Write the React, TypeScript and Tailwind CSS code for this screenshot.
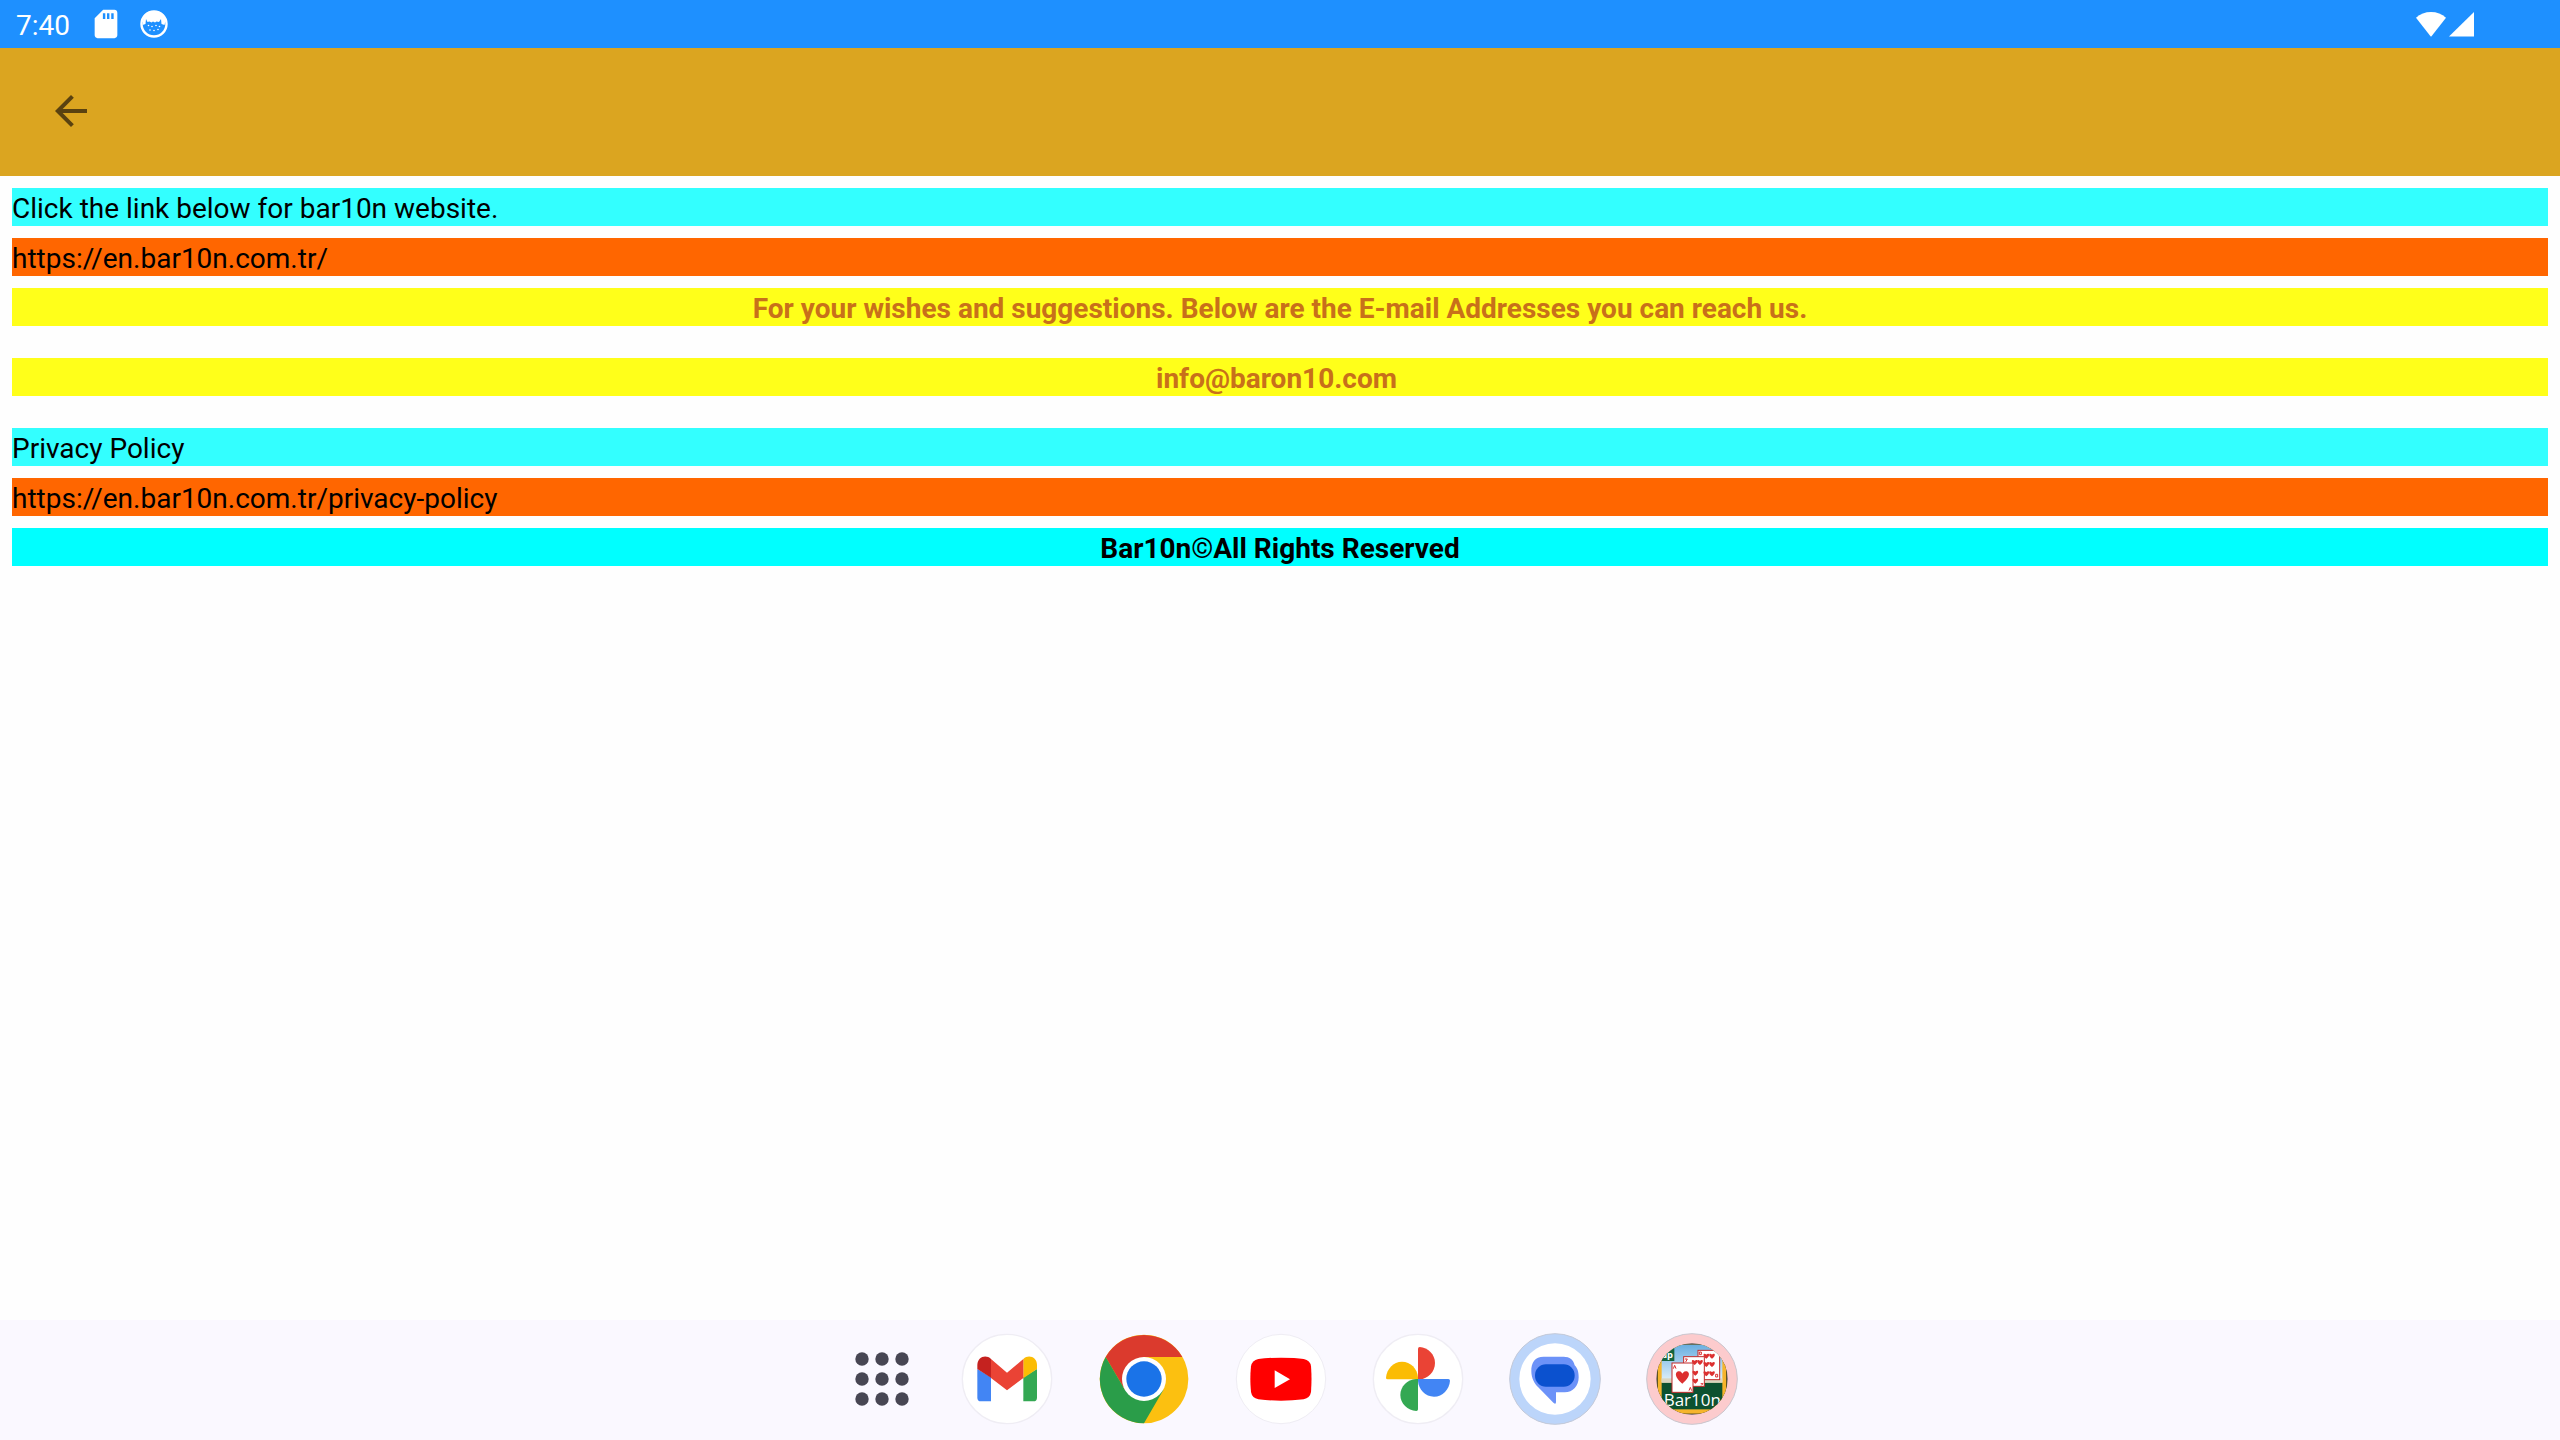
import type { ReactNode } from "react";

function StatusBar() {
  return (
    <div className="flex h-12 items-center justify-between bg-[#1e90ff] pl-4 pr-[86px] text-white">
      <div className="flex items-center gap-3.5">
        <span className="pr-[5px] pt-1 text-[28px] leading-8">7:40</span>
        <svg viewBox="0 0 24 24" className="size-[34px]" fill="currentColor" aria-hidden="true">
          <path
            fillRule="evenodd"
            d="M18 2h-8L4 8v12c0 1.1.9 2 2 2h12c1.1 0 2-.9 2-2V4c0-1.100-.9-2-2-2zM9.800 4.400h1.700v4H9.800zM12.700 4.400h1.700v4h-1.700zM15.700 4.400h1.700v4h-1.700z"
          />
        </svg>
        <svg viewBox="0 0 34 34" className="size-[34px]" aria-hidden="true">
          <circle cx="17" cy="17" r="12.500" fill="none" stroke="currentColor" strokeWidth="2.400" />
          <path
            d="M6.500 9.500C9 5 13 4 17 4s8 1 10.500 5.500l1 4.500-1 4-3-1-.5-5-2 3-2.500-.500-1.500 1-2-1-1.500 1-2-1-2 .5-1.500-3-.5 5-3 1L6 14z"
            fill="currentColor"
          />
          <g fill="currentColor">
            <circle cx="11.500" cy="18.500" r=".8" />
            <circle cx="15" cy="19.500" r=".8" />
            <circle cx="19" cy="18.500" r=".8" />
            <circle cx="22.500" cy="19.500" r=".8" />
            <circle cx="13" cy="23" r=".8" />
            <circle cx="17" cy="23.500" r=".8" />
            <circle cx="21" cy="22.500" r=".8" />
          </g>
        </svg>
      </div>
      <div className="flex items-center gap-[3px]">
        <svg viewBox="0 0 30 26" className="h-[26px] w-[30px]" fill="currentColor" aria-hidden="true">
          <path d="M0 6.800C4 3 9.300 1 15 1s11 2 15 5.800L15.500 25.200c-.3.3-.7.3-1 0z" />
        </svg>
        <svg viewBox="0 0 25 26" className="h-[26px] w-[25px]" fill="currentColor" aria-hidden="true">
          <path d="M25 1v24.500H0z" />
        </svg>
      </div>
    </div>
  );
}

function AppBar() {
  return (
    <header className="flex h-32 items-center bg-[#dba520] pb-0.5 pl-[47px]">
      <button type="button" aria-label="Back" className="text-[#5a4210]">
        <svg viewBox="0 0 24 24" className="size-12" fill="currentColor" aria-hidden="true">
          <path d="M20 11H7.830l5.590-5.590L12 4l-8 8 8 8 1.410-1.410L7.830 13H20v-2z" />
        </svg>
      </button>
    </header>
  );
}

function DockApp({ label, viewBox, children }: { label: string; viewBox: string; children: ReactNode }) {
  return (
    <button type="button" aria-label={label} className="shrink-0 rounded-full">
      <svg viewBox={viewBox} className="size-[92px]" aria-hidden="true">
        {children}
      </svg>
    </button>
  );
}

function Dock() {
  return (
    <nav className="flex h-[120px] items-center justify-center gap-[45px] bg-[#faf8ff] pb-0.5 pl-8">
      <button type="button" aria-label="All apps" className="mr-[7px] shrink-0">
        <svg viewBox="0 0 54 54" className="size-[54px]" fill="#474653" aria-hidden="true">
          {[7, 27, 47].map((y) => [7, 27, 47].map((x) => <circle key={`${x}-${y}`} cx={x} cy={y} r="6.700" />))}
        </svg>
      </button>

      <DockApp label="Gmail" viewBox="393 70 276 276">
        <circle cx="531" cy="208" r="134" fill="#fff" stroke="#efedf4" strokeWidth="4" />
        <path d="M442 178v86q0 11 11 11h30v-72z" fill="#4285f4" />
        <path d="M580 203v72h30q11 0 11-11v-86z" fill="#34a853" />
        <path d="M442 178v-12c0-22 24-34 41-18v56z" fill="#c5221f" />
        <path d="M580 148c17-16 41-4 41 18v12l-41 28z" fill="#fbbc04" />
        <path d="M483 148l48 41 49-41v57l-49 37-48-37z" fill="#ea4335" />
      </DockApp>

      <DockApp label="Chrome" viewBox="53 70 276 276">
        <circle cx="191" cy="208" r="133" fill="#fcc010" />
        <path d="M76 142A133 133 0 0 1 306 142H191L134 241z" fill="#db3a2d" />
        <path d="M76 142A133 133 0 0 0 191 341L249 241 191 208 134 241z" fill="#2a9d49" />
        <circle cx="191" cy="208" r="66" fill="#fff" />
        <circle cx="191" cy="208" r="53" fill="#1a73e8" />
      </DockApp>

      <DockApp label="YouTube" viewBox="464 70 276 276">
        <circle cx="602" cy="208" r="134" fill="#fff" stroke="#efedf4" strokeWidth="3" />
        <path
          d="M602 144q44 0 68 4 20 4 22 22 3 38 0 77-3 18-22 22-68 8-136 0-19-4-22-22-4-39 0-77 3-18 22-22 24-4 68-4z"
          fill="#f00"
        />
        <path d="M583 182v53l46-26.500z" fill="#fff" />
      </DockApp>

      <DockApp label="Photos" viewBox="65 70 276 276">
        <circle cx="203" cy="208" r="134" fill="#fff" stroke="#efedf4" strokeWidth="4" />
        <path d="M203 209v-92q0-5 5-5c25 2 46 22 46 48s-21 48-46 49z" fill="#ea4335" />
        <path d="M203 209h-91q-5 0-5-5c2-26 22-48 48-48s46 21 48 47z" fill="#fbbc04" />
        <path d="M203 208v91q0 5-5 5c-26-2-48-22-48-48s21-46 47-48z" fill="#34a853" />
        <path d="M203 208h91q5 0 5 5c-2 26-22 48-48 48s-46-21-48-47z" fill="#4285f4" />
      </DockApp>

      <DockApp label="Messages" viewBox="56 70 276 276">
        <circle cx="194" cy="208" r="136" fill="#bcd5fa" stroke="#c3c9d8" strokeWidth="3" />
        <circle cx="194" cy="208" r="107" fill="#fff" />
        <path
          d="M160 141h60c18 0 30 10 33 26 8 8 12 18 12 36 0 26-17 45-42 45h-26v29q0 8-7 3l-47-48c-10-9-20-26-20-47-1-26 11-44 37-44z"
          fill="#6c92f8"
        />
        <rect x="134" y="164" width="119" height="67" rx="33" fill="#0b51cf" />
      </DockApp>

      <DockApp label="Bar10n" viewBox="47 70 276 276">
        <defs>
          <clipPath id="bar10n-face">
            <circle cx="185" cy="208" r="107" />
          </clipPath>
          <linearGradient id="bar10n-sky" x1="0" y1="0" x2="0" y2="1">
            <stop offset="0" stopColor="#69aee0" />
            <stop offset="1" stopColor="#e4f3fb" />
          </linearGradient>
        </defs>
        <circle cx="185" cy="208" r="136" fill="#fccbcd" stroke="#c9c6ce" strokeWidth="3" />
        <g clipPath="url(#bar10n-face)">
          <rect x="78" y="101" width="214" height="214" fill="#15251c" />
          <rect x="82" y="105" width="206" height="207" fill="#f6b42c" />
          <rect x="94" y="105" width="182" height="114" fill="url(#bar10n-sky)" />
          <rect x="94" y="112" width="38" height="42" fill="#14633c" />
          <rect x="94" y="219" width="182" height="80" fill="#0c5130" />
          <rect x="94" y="206" width="182" height="13" fill="#d9d5c0" />
          <text x="92" y="145" fontSize="28" fontWeight="700" fill="#fff" fontFamily="Open Sans, sans-serif">
            up
          </text>
          <g fill="#fff" stroke="#c22a2a" strokeWidth="3">
            <rect x="203" y="122" width="65" height="88" />
            <rect x="160" y="141" width="62" height="89" />
            <rect x="125" y="160" width="63" height="88" />
          </g>
          <g fill="#dc3030">
            {[
              [228, 139],
              [245, 139],
              [228, 164],
              [245, 164],
              [228, 192],
              [245, 192],
              [193, 158],
              [209, 158],
              [195, 190],
              [195, 214],
            ].map(([x, y]) => (
              <path
                key={`${x}-${y}`}
                transform={`translate(${x} ${y})`}
                d="M0 8C-12-1-9-7-5-7-2-7 0-4 0-4s2-3 5-3c4 0 7 6-5 15z"
              />
            ))}
            <path d="M156 222c-27-22-21-37-10-37 7 0 10 7 10 7s4-7 11-7c11 0 16 15-11 37z" />
          </g>
          <g fill="none" stroke="#dc3030" strokeWidth="3">
            <path d="M129 177l4-10 4 10M176 243l4-10 4 10M164 148h7l-5 9M211 222h7l-5 5M207 127v8h6v-8zM256 194v8h6v-8z" />
          </g>
          <text x="100" y="288" fontSize="51" fill="#fff" fontFamily="Open Sans, sans-serif">
            Bar10n
          </text>
        </g>
      </DockApp>
    </nav>
  );
}

export default function App() {
  return (
    <div className="flex min-h-screen flex-col bg-[#fefefe] font-['Roboto',sans-serif]">
      <StatusBar />
      <AppBar />
      <main className="flex grow flex-col gap-3 p-3 text-[28px] leading-[34px] text-black">
        <p className="bg-[#33ffff] pt-1">Click the link below for bar10n website.</p>
        <a href="https://en.bar10n.com.tr/" className="bg-[#ff6600] pt-1">
          https://en.bar10n.com.tr/
        </a>
        <p className="mb-5 bg-[#ffff1a] pt-1 text-center font-bold text-[#c8701a]">
          For your wishes and suggestions. Below are the E-mail Addresses you can reach us.
        </p>
        <a href="mailto:info@baron10.com" className="mb-5 bg-[#ffff1a] pt-1 text-center font-bold text-[#c8701a]">
          info@baron10.com&nbsp;
        </a>
        <p className="bg-[#33ffff] pt-1">Privacy Policy</p>
        <a href="https://en.bar10n.com.tr/privacy-policy" className="bg-[#ff6600] pt-1">
          https://en.bar10n.com.tr/privacy-policy
        </a>
        <p className="bg-[#00ffff] pt-1 text-center font-bold">
          Bar10n<span className="font-normal">©</span>All Rights Reserved
        </p>
      </main>
      <Dock />
    </div>
  );
}
